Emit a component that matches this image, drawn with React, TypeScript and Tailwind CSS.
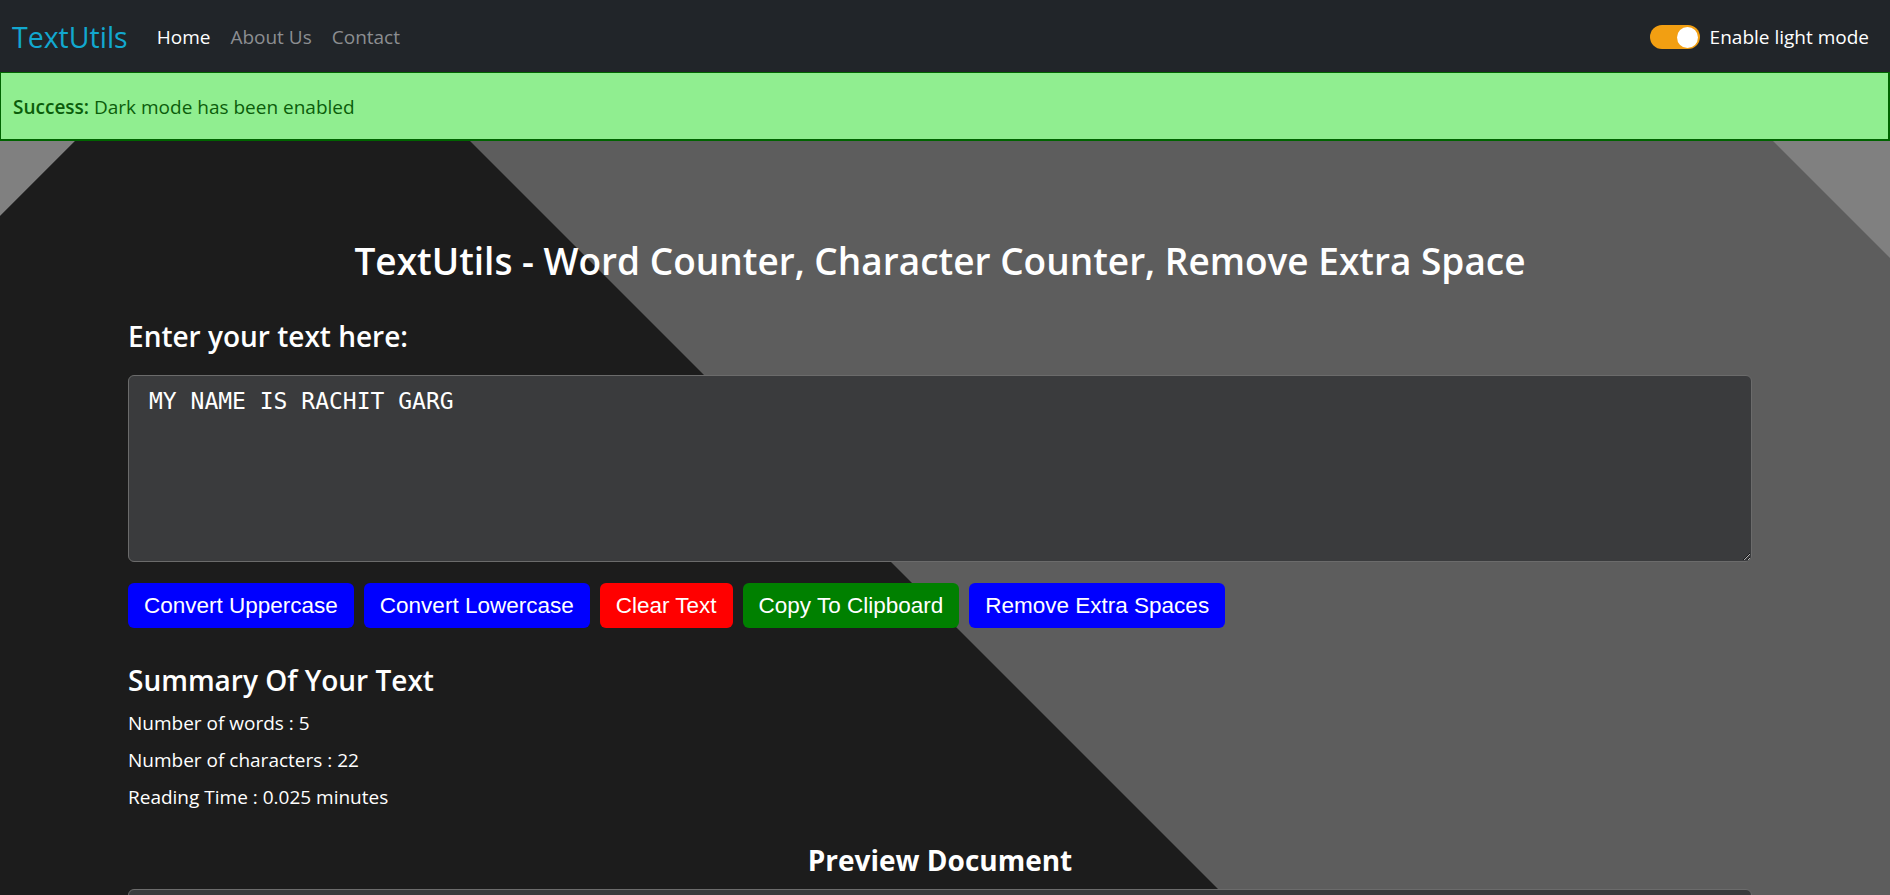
import React from "react";

const text = "MY NAME IS RACHIT GARG";

function Navbar() {
  return (
    <nav className="flex h-[72px] items-center justify-between bg-[#212529] pl-3 pr-[21px] pt-[2px]">
      <div className="flex items-center">
        <a href="#" className="text-[28.5px] font-medium leading-none text-[#12a8cf]">
          TextUtils
        </a>
        <ul className="ml-[19px] flex items-center text-[19px]">
          <li>
            <a href="#" className="px-[10px] text-white">
              Home
            </a>
          </li>
          <li>
            <a href="#" className="px-[10px] text-[#8c8e91]">
              About Us
            </a>
          </li>
          <li>
            <a href="#" className="px-[10px] text-[#8c8e91]">
              Contact
            </a>
          </li>
        </ul>
      </div>
      <label className="flex items-center gap-[10px] text-[19px] text-white">
        <span className="flex h-[24px] w-[50px] items-center justify-end rounded-full bg-[#f29f12] px-[2px]">
          <span className="h-[21px] w-[21px] rounded-full bg-white" />
        </span>
        Enable light mode
      </label>
    </nav>
  );
}

function Alert() {
  return (
    <div className="flex h-[69px] items-center border border-b-2 border-r-2 border-[#006400] bg-[#90ee90] px-3 pt-[2px] text-[19px] text-[#0b5d0b]">
      <strong className="font-semibold">Success:</strong>&nbsp;Dark mode has been enabled
    </div>
  );
}

// diagonal backdrop behind the form
function Backdrop() {
  return (
    <svg className="absolute inset-0 h-full w-full" aria-hidden="true">
      <rect x="0" y="0" width="4000" height="4000" fill="#5d5d5d" />
      <polygon points="0,0 75,0 0,75" fill="#808080" />
      <polygon points="1773,0 4000,0 4000,2227" fill="#808080" />
      <polygon points="75,0 470,0 2470,2000 0,2000 0,75" fill="#1c1c1c" />
    </svg>
  );
}

function Button({ label, color }: { label: string; color: string }) {
  return (
    <button
      className={`h-[45px] rounded-[6px] px-[16px] font-['Liberation_Sans',Arial,sans-serif] text-[22.5px] text-white ${color}`}
    >
      {label}
    </button>
  );
}

function TextForm() {
  const words = text.split(/\s+/).filter((w) => w.length > 0).length;

  return (
    <div className="relative ml-[128px] w-[1624px] pt-[96px] text-white">
      <h1 className="text-center text-[37px] font-semibold leading-[48px]">
        TextUtils - Word Counter, Character Counter, Remove Extra Space
      </h1>
      <h3 className="mt-[34px] text-[28px] font-semibold leading-[34px]">Enter your text here:</h3>
      <textarea
        readOnly
        value={text}
        className="mt-[22px] block h-[187px] w-full rounded-[6px] border border-[#6b6b6b] bg-[#3a3b3d] px-[20px] py-[8px] font-['DejaVu_Sans_Mono',monospace] text-[23px] leading-[1.5] text-white outline-none"
      />
      <div className="mt-[21px] flex gap-[10px]">
        <Button label="Convert Uppercase" color="bg-[#0000ff]" />
        <Button label="Convert Lowercase" color="bg-[#0000ff]" />
        <Button label="Clear Text" color="bg-[#ff0000]" />
        <Button label="Copy To Clipboard" color="bg-[#008000]" />
        <Button label="Remove Extra Spaces" color="bg-[#0000ff]" />
      </div>

      <h2 className="mt-[35px] text-[28px] font-semibold leading-[34px]">Summary Of Your Text</h2>
      <div className="mt-[8px] text-[19px] leading-[37px]">
        <p>Number of words : {words}</p>
        <p>Number of characters : {text.length}</p>
        <p>Reading Time : {0.005 * words} minutes</p>
      </div>

      <h3 className="mt-[27px] text-center text-[28px] font-bold leading-[34px]">Preview Document</h3>
      <textarea
        readOnly
        value={text}
        className="mt-[12px] block h-[187px] w-full rounded-[6px] border border-[#6b6b6b] bg-[#3a3b3d] px-[20px] py-[8px] font-['DejaVu_Sans_Mono',monospace] text-[23px] leading-[1.5] text-white outline-none"
      />
    </div>
  );
}

export default function App() {
  return (
    <div className="min-h-screen bg-[#1c1c1c] font-['Open_Sans',sans-serif]">
      <Navbar />
      <Alert />
      <main className="relative overflow-hidden pb-10">
        <Backdrop />
        <TextForm />
      </main>
    </div>
  );
}
